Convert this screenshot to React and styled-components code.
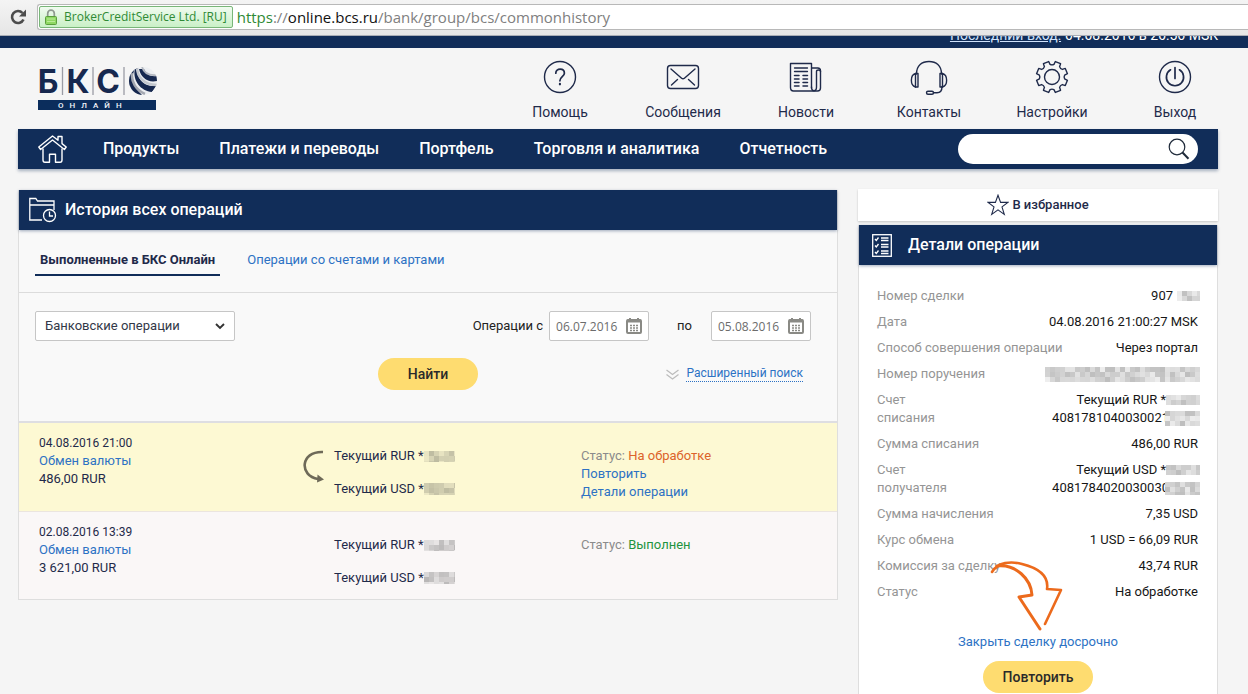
import React from "react";
import styled, { createGlobalStyle } from "styled-components";

const navy = "#112d59";
const ink = "#1f2a4a";
const link = "#2d72c4";
const yellow = "#fedc70";

const GlobalStyle = createGlobalStyle`
  *, *::before, *::after { box-sizing: border-box; }
  body {
    margin: 0;
    background: #f5f5f5;
    color: ${ink};
    font: 13px/18px Roboto, "Liberation Sans", sans-serif;
  }
  button, input, select { font: inherit; color: inherit; }
  button { cursor: pointer; }
  a { color: ${link}; text-decoration: none; }
`;

const Page = styled.div`
  min-height: 100vh;
  display: flex;
  flex-direction: column;
`;

/* Browser bar */
const BrowserBar = styled.div`
  display: flex;
  align-items: center;
  height: 36px;
  padding: 0 0 2px 9px;
  gap: 10px;
  background: linear-gradient(#f4f4f4, #e6e6e6);
  border-bottom: 1px solid #a9adb5;
`;
const Reload = styled.button`
  display: flex;
  padding: 0;
  border: 0;
  background: none;
`;
const AddressBox = styled.form`
  flex: 1;
  display: flex;
  align-items: center;
  gap: 4px;
  height: 26px;
  padding: 1px;
  background: #fff;
  border: 1px solid #b8b8b8;
  border-right: 0;
  border-radius: 3px 0 0 3px;
`;
const Certificate = styled.span`
  display: flex;
  align-items: center;
  gap: 7px;
  height: 22px;
  padding: 0 5px;
  border: 1px solid #79b679;
  border-radius: 2px;
  background: linear-gradient(#f1fbf0, #c9f0c6);
  color: #2f8a35;
  font: 12px/20px "Open Sans", sans-serif;
  white-space: nowrap;
`;
const Url = styled.span`
  color: #808080;
  font: 15px/22px "Open Sans", sans-serif;
  white-space: nowrap;
  b { font-weight: 400; color: #111; }
  em { font-style: normal; color: #2f8a35; }
`;

/* Header */
const LastLogin = styled.div`
  display: flex;
  justify-content: flex-end;
  align-items: flex-end;
  height: 12px;
  padding: 0 30px 6px 18px;
  overflow: hidden;
  background: ${navy};
  color: #fff;
  gap: 4px;
  font-size: 14px;
  line-height: 14px;
  a { color: #cfe2fb; text-decoration: underline; }
`;
const Header = styled.header`
  display: flex;
  justify-content: space-between;
  align-items: flex-start;
  height: 81px;
  padding: 12px 31px 0 38px;
`;
const LogoLink = styled.a`
  display: block;
  padding-top: 6px;
`;
const Services = styled.nav`
  display: grid;
  grid-template-columns: repeat(6, 84px);
  column-gap: 39px;
`;
const Service = styled.a`
  display: flex;
  flex-direction: column;
  align-items: center;
  gap: 8px;
  color: ${ink};
  font-size: 14px;
  line-height: 20px;
  white-space: nowrap;
`;

const MenuBar = styled.nav`
  display: flex;
  align-items: center;
  gap: 40px;
  height: 40px;
  margin: 0 30px 0 18px;
  padding: 0 20px;
  background: ${navy};
  box-shadow: 0 2px 3px rgba(17, 45, 89, 0.35);
`;
const HomeLink = styled.a`
  display: flex;
  width: 30px;
  margin-right: -5px;
`;
const MenuItem = styled.a`
  color: #fff;
  font-size: 16px;
  font-weight: 500;
  white-space: nowrap;
`;
const Search = styled.form`
  display: flex;
  align-items: center;
  width: 240px;
  height: 30px;
  margin-left: auto;
  padding: 0 8px 0 16px;
  border-radius: 15px;
  background: #fff;
  input { flex: 1; min-width: 0; border: 0; outline: 0; background: none; }
  button { display: flex; padding: 0; border: 0; background: none; }
`;

/* Main columns */
const Columns = styled.main`
  flex: 1;
  display: grid;
  grid-template-columns: minmax(0, 1fr) 360px;
  column-gap: 20px;
  padding: 20px 30px 0 18px;
`;
const History = styled.section`
  align-self: start;
  margin-top: 1px;
  border: 1px solid #dedede;
  border-top: 0;
  background: #f9f9f9;
`;
const PanelHead = styled.div`
  display: flex;
  align-items: center;
  gap: ${(p) => p.$gap};
  height: 40px;
  padding: 0 ${(p) => p.$pad};
  background: ${navy};
  box-shadow: 0 1px 3px rgba(17, 45, 89, 0.4);
  color: #fff;
  h2 { margin: 0; font-size: 16px; font-weight: 500; line-height: 20px; }
`;
const Tabs = styled.div`
  display: flex;
  align-items: flex-start;
  gap: 22px;
  height: 63px;
  padding: 20px 16px 0;
  border-bottom: 1px solid #dcdcdc;
`;
const Tab = styled.a`
  height: 26px;
  padding: 0 5px;
  line-height: 20px;
  color: ${(p) => (p.$active ? ink : link)};
  font-weight: ${(p) => (p.$active ? 700 : 400)};
  border-bottom: 2px solid ${(p) => (p.$active ? navy : "transparent")};
`;

const Filters = styled.form`
  height: 130px;
  padding: 18px 26px 0 16px;
  border-bottom: 2px solid #dedee2;
`;
const FilterRow = styled.div`
  display: flex;
  align-items: center;
  height: 30px;
  color: #222;
`;
const Field = styled.span`
  display: flex;
  align-items: center;
  width: ${(p) => p.$width};
  height: 30px;
  padding-right: 6px;
  border: 1px solid #c6c6c6;
  border-radius: 2px;
  background: #fff;
`;
const Select = styled.select`
  flex: 1;
  height: 28px;
  padding: 0 9px;
  margin-right: -22px;
  border: 0;
  outline: 0;
  appearance: none;
  background: none;
  color: #333848;
`;
const ChevronBox = styled.span`
  display: flex;
  margin-right: 3px;
  pointer-events: none;
`;
const DateInput = styled.input`
  flex: 1;
  min-width: 0;
  height: 28px;
  padding: 0 0 0 6px;
  border: 0;
  outline: 0;
  background: none;
  color: #6c6c6c;
  font: 12px/18px "Open Sans", sans-serif;
`;
const IconButton = styled.button`
  display: flex;
  padding: 0;
  border: 0;
  background: none;
`;
const DateGroup = styled.div`
  display: flex;
  align-items: center;
  margin-left: auto;
`;
const DateLabel = styled.label`
  padding: ${(p) => p.$pad};
`;
const ActionRow = styled.div`
  display: grid;
  grid-template-columns: 1fr 100px 1fr;
  align-items: center;
  margin-top: 17px;
  padding-left: 10px;
`;
const Pill = styled.button`
  width: ${(p) => p.$width};
  height: 32px;
  border: 0;
  border-radius: 16px;
  background: ${yellow};
  color: #2a2a2a;
  font-size: 14px;
  font-weight: 500;
`;
const Advanced = styled.a`
  justify-self: end;
  display: flex;
  align-items: center;
  gap: 7px;
  padding-right: 8px;
  font-size: 12px;
  span { line-height: 15px; border-bottom: 1px dotted ${link}; }
`;

const Operation = styled.article`
  display: grid;
  grid-template-columns: 36% 1fr 236px;
  min-height: 88px;
  padding: 11px 20px 0;
  background: ${(p) => (p.$current ? "#fdf9d3" : "#faf7f7")};
  border-top: ${(p) => (p.$current ? "0" : "1px solid #ebe5df")};
  time { font-size: 12px; }
`;
const Lines = styled.div`
  display: flex;
  flex-direction: column;
  padding-top: ${(p) => (p.$low ? "13px" : "0")};
`;
const Accounts = styled.div`
  display: grid;
  grid-template-columns: 31px 1fr;
  padding-top: 13px;
  margin-left: -16px;
`;
const AccountList = styled.div`
  display: flex;
  flex-direction: column;
  gap: 15px;
`;
const Account = styled.span`
  display: flex;
  align-items: center;
`;
const Status = styled.span`
  color: #8b8b8b;
  b { font-weight: 400; color: ${(p) => (p.$done ? "#1f9440" : "#dc632a")}; }
`;

/* Details column */
const Side = styled.aside`
  display: flex;
  flex-direction: column;
  gap: 4px;
`;
const Favorite = styled.button`
  display: flex;
  align-items: center;
  justify-content: center;
  gap: 3px;
  height: 32px;
  padding: 0;
  border: 0;
  background: #fff;
  box-shadow: 0 1px 2px rgba(0, 0, 0, 0.2);
  font-weight: 500;
`;
const Details = styled.section`
  position: relative;
  flex: 1;
  display: flex;
  flex-direction: column;
  border: 1px solid #dedede;
  border-width: 0 1px;
  background: #fff;
`;
const DetailList = styled.dl`
  display: flex;
  flex-direction: column;
  gap: 8px;
  margin: 0;
  padding: 22px 17px 0 18px;
`;
const Detail = styled.div`
  display: flex;
  justify-content: space-between;
  dt { max-width: ${(p) => (p.$narrow ? "80px" : "none")}; color: #959595; }
  dd { margin: 0; padding-right: 2px; color: #161616; text-align: right; }
`;
const MaskedLine = styled.span`
  display: flex;
  align-items: center;
  justify-content: flex-end;
  height: 18px;
  gap: ${(p) => p.$gap || "0"};
  margin-right: -2px;
`;
const Cover = styled.span`
  display: flex;
  margin-left: ${(p) => (p.$over ? "-4px" : "0")};
`;
const DetailActions = styled.div`
  display: flex;
  flex-direction: column;
  align-items: center;
  gap: 10px;
  padding-top: 32px;
`;
const Pointer = styled.svg`
  position: absolute;
  left: 130px;
  top: 334px;
  pointer-events: none;
`;

const line = { fill: "none", stroke: "currentColor", strokeWidth: 1.4, strokeLinecap: "round", strokeLinejoin: "round" };

const gearTeeth = (() => {
  const pts = [];
  for (let i = 0; i < 8; i += 1) {
    const base = (i * Math.PI) / 4 + Math.PI / 8;
    [[-0.24, 12.8], [-0.18, 15.8], [0.18, 15.8], [0.24, 12.8]].forEach(([a, r]) => {
      const t = base + a;
      pts.push(`${(18 + r * Math.sin(t)).toFixed(2)} ${(17 - r * Math.cos(t)).toFixed(2)}`);
    });
  }
  let d = `M${pts[0]}`;
  for (let i = 1; i < pts.length; i += 1) {
    d += i % 4 === 0 ? `A4 4 0 0 0 ${pts[i]}` : `L${pts[i]}`;
  }
  return `${d}A4 4 0 0 0 ${pts[0]}Z`;
})();

const icons = {
  help: (
    <>
      <circle cx="18" cy="17" r="15.5" />
      <path d="M13.8 13.2c0-5.4 8.6-5.3 8.6 0 0 3.3-4.5 3.8-4.5 7.6" strokeWidth="1.7" />
      <path d="M17.9 23.9v.4" strokeWidth="2.2" />
    </>
  ),
  mail: (
    <>
      <rect x="2.5" y="5.5" width="31" height="23" rx="3" />
      <path d="M6 9l10.6 9.2c.8.7 2 .7 2.8 0L30 9M6.5 25l6-5.5M29.5 25l-6-5.5" />
    </>
  ),
  news: (
    <>
      <path d="M23.500 28V3.500H2.500v24c0 2 1.200 3.500 3 3.500h24c1.800 0 3-1.200 3-3V11c0-2-1.200-3-2.700-3h-6.300" />
      <path d="M23.500 27c0 5 5 5 5 0V11.500c0-2 4-2 4 0" />
      <path d="M6.500 8h13M6.500 11.500h13" strokeWidth="1.300" />
      <path d="M6.500 15.500h4.500M15 15.500h4.500M6.500 19h4.500M15 19h4.500M6.500 22.500h4.500M15 22.500h4.500M6.500 26h4.500M15 26h4.500" strokeWidth="1.500" />
    </>
  ),
  contacts: (
    <>
      <path d="M5.500 14C5.500 5.500 11 1.500 18 1.500S30.500 5.500 30.500 14M31 26.500c0 4-2 6.300-5 6.300h-3.500" />
      <path d="M4.500 13.500C-1 15-1 25.500 4.500 27zM31.500 13.500c5.500 1.500 5.500 12 0 13.500z" />
      <path d="M4.500 13.500H7V27H4.500M31.500 13.500H29V27h2.500" />
      <rect x="15.500" y="31.200" width="7" height="3" rx="1.500" />
    </>
  ),
  settings: (
    <>
      <circle cx="18" cy="17" r="7.500" />
      <path d={gearTeeth} />
    </>
  ),
  power: (
    <>
      <circle cx="18" cy="17" r="15.500" />
      <path d="M13.500 9.800a8.600 8.600 0 1 0 9 0M18 7.500v11" strokeWidth="1.700" />
    </>
  ),
};

function ServiceIcon({ name }) {
  return (
    <svg width="36" height="34" viewBox="0 0 36 34" overflow="visible" aria-hidden="true" {...line}>
      {icons[name]}
    </svg>
  );
}

function Logo() {
  return (
    <svg width="120" height="46" viewBox="0 0 120 46" overflow="visible" role="img" aria-label="БКС Онлайн">
      <g fill="#16284f" fontFamily="Inter, sans-serif" fontWeight="700" fontSize="32">
        <text x="10" y="27" textAnchor="middle">Б</text>
        <text x="40" y="27" textAnchor="middle">К</text>
        <text x="70" y="27" textAnchor="middle">С</text>
      </g>
      <path d="M24.500 1v28M55 1v28M86 1v28" stroke="#9a9ca5" strokeWidth="1.300" />
      <defs>
        <clipPath id="globe"><circle cx="105" cy="15" r="14" /></clipPath>
      </defs>
      <g clipPath="url(#globe)">
        <rect x="91" y="1" width="28" height="28" fill="#eceef1" />
        <path d="M91 1h7c-6 8-3 20 6 28H91z" fill="#16284f" />
        <path d="M94 7c-1 9 4 17 13 21" stroke="#a4a8b1" strokeWidth="2.500" fill="none" />
        <path d="M97 2c-3 13 6 23 17 24l4-6C106 21 98 13 100 1z" fill="#16284f" />
        <path d="M99 1c0 10 7 18 20 18" stroke="#c3c7ce" strokeWidth="2.500" fill="none" />
        <path d="M101 3c2 9 9 14 18 12v-5c-7 1-11-2-13-7z" fill="#16284f" />
        <path d="M104 1c2 6 7 9 15 8" stroke="#b4b8c0" strokeWidth="1.800" fill="none" />
      </g>
      <rect y="34" width="118" height="10" fill="#0b2d5c" />
      <text x="20" y="42" fill="#f2f6fb" fontFamily="Roboto, sans-serif" fontSize="8" fontWeight="500" letterSpacing="6">ОНЛАЙН</text>
    </svg>
  );
}

function Calendar() {
  return (
    <svg width="16" height="16" viewBox="0 0 16 16" aria-hidden="true">
      <rect x="1" y="2" width="14" height="13" rx="1" fill="#fff" stroke="#8a8a85" strokeWidth="2" />
      <path d="M1 3h14" stroke="#8a8a85" strokeWidth="3" />
      <path d="M4 0v2M12 0v2" stroke="#8a8a85" strokeWidth="2" />
      <path d="M4 7.500h8M4 10h8M4 12.500h8" stroke="#8a8a85" strokeWidth="1.400" strokeDasharray="2 1" />
    </svg>
  );
}

const noise = (n) => {
  const v = Math.sin(n * 12.9898) * 43758.5453;
  return v - Math.floor(v);
};

/* Pixelated cover over hidden account digits */
function Mosaic({ width, height = 12, cell = 5, seed = 0, over = false }) {
  const cols = Math.ceil(width / cell);
  const rows = Math.ceil(height / cell);
  const cells = [];
  for (let r = 0; r < rows; r += 1) {
    for (let c = 0; c < cols; c += 1) {
      const o = 0.08 + 0.24 * noise(c * 7 + r * 31 + seed * 101 + 1);
      cells.push(<rect key={`${r}-${c}`} x={c * cell} y={r * cell} width={cell} height={cell} fill="#333" opacity={o} />);
    }
  }
  return (
    <Cover $over={over}>
      <svg width={width} height={height} shapeRendering="crispEdges" aria-hidden="true">
        {over && <rect width={width} height={height} fill="#fff" />}
        {cells}
      </svg>
    </Cover>
  );
}

const services = [
  ["help", "Помощь"],
  ["mail", "Сообщения"],
  ["news", "Новости"],
  ["contacts", "Контакты"],
  ["settings", "Настройки"],
  ["power", "Выход"],
];
const menu = ["Продукты", "Платежи и переводы", "Портфель", "Торговля и аналитика", "Отчетность"];

function OperationRow({ date, amount, current, seed, children }) {
  return (
    <Operation $current={current}>
      <Lines>
        <time>{date}</time>
        <a href="#exchange">Обмен валюты</a>
        <span>{amount}</span>
      </Lines>
      <Accounts>
        <span>
          {current && (
            <svg width="22" height="38" viewBox="0 0 22 38" aria-hidden="true">
              <path d="M20 5C-3 4-4 29 15 32" fill="none" stroke="#6e6a58" strokeWidth="2.600" />
              <path d="M14.500 27.500l6.500 5-7 3z" fill="#6e6a58" />
            </svg>
          )}
        </span>
        <AccountList>
          <Account>Текущий RUR *<Mosaic width={31} height={11} seed={seed} /></Account>
          <Account>Текущий USD *<Mosaic width={31} seed={seed + 3} /></Account>
        </AccountList>
      </Accounts>
      <Lines $low>{children}</Lines>
    </Operation>
  );
}

export default function App() {
  return (
    <Page>
      <GlobalStyle />
      <BrowserBar>
        <Reload aria-label="Обновить">
          <svg width="18" height="18" viewBox="0 0 18 18" aria-hidden="true">
            <path d="M14.500 11.500a6 6 0 1 1-1-6.500" fill="none" stroke="#4c4c4c" strokeWidth="2.600" />
            <path d="M17 1.500v7h-7z" fill="#4c4c4c" />
          </svg>
        </Reload>
        <AddressBox>
          <Certificate>
            <svg width="12" height="16" viewBox="0 0 12 16" aria-hidden="true">
              <path d="M2.700 8V4.500a3.300 3.300 0 0 1 6.600 0V8" fill="none" stroke="#8f9a8f" strokeWidth="1.700" />
              <rect x="0.500" y="7.500" width="11" height="8" rx="1" fill="#8ed862" stroke="#5a9e3c" />
              <path d="M2 10h8M2 12.500h8" stroke="#b9ec97" />
            </svg>
            BrokerCreditService Ltd. [RU]
          </Certificate>
          <Url><em>https</em>://<b>online.bcs.ru</b>/bank/group/bcs/commonhistory</Url>
        </AddressBox>
      </BrowserBar>
      <LastLogin>
        <a href="#last">Последний вход:</a>
        <span>04.08.2016 в 20:56 MSK</span>
      </LastLogin>
      <Header>
        <LogoLink href="#home"><Logo /></LogoLink>
        <Services>
          {services.map(([name, label]) => (
            <Service key={name} href={`#${name}`}>
              <ServiceIcon name={name} />
              {label}
            </Service>
          ))}
        </Services>
      </Header>
      <MenuBar>
        <HomeLink href="#home" aria-label="Главная">
          <svg width="30" height="30" viewBox="0 0 30 30" aria-hidden="true" fill="none" stroke="#fff" strokeWidth="1.400" strokeLinejoin="round">
            <path d="M14.500 2L.8 13l1.800 2.500L14.500 6l11.900 9.500 1.800-2.500-4.200-3.400V2.500h-4v3.800z" />
            <path d="M5 14.500V26c0 1.500.8 2.300 2 2.300h4.500v-8h6v8H22c1.300 0 2-.9 2-2.300V14.500" />
          </svg>
        </HomeLink>
        {menu.map((m) => (
          <MenuItem key={m} href="#menu">{m}</MenuItem>
        ))}
        <Search>
          <input type="search" aria-label="Поиск" />
          <button type="button" aria-label="Найти на сайте">
            <svg width="22" height="22" viewBox="0 0 22 22" fill="none" stroke="#1f2a3a" aria-hidden="true">
              <circle cx="9" cy="9" r="7.800" strokeWidth="1.200" />
              <path d="M14.500 14.500l6 6.300" strokeWidth="2" />
            </svg>
          </button>
        </Search>
      </MenuBar>

      <Columns>
        <History>
          <PanelHead $gap="8px" $pad="10px">
            <svg width="28" height="26" viewBox="0 0 28 26" aria-hidden="true" fill="none" stroke="#fff" strokeWidth="1.300">
              <path d="M13 23H.8V1.500h6L8.500 4H25v9M.8 8H25" />
              <circle cx="20.500" cy="18.500" r="6" />
              <path d="M20.500 14.500v4.500h3.500" />
            </svg>
            <h2>История всех операций</h2>
          </PanelHead>
          <Tabs>
            <Tab href="#done" $active>Выполненные в БКС Онлайн</Tab>
            <Tab href="#accounts">Операции со счетами и картами</Tab>
          </Tabs>
          <Filters>
            <FilterRow>
              <Field $width="200px">
                <Select aria-label="Тип операций">
                  <option>Банковские операции</option>
                </Select>
                <ChevronBox>
                  <svg width="10" height="8" viewBox="0 0 10 8" fill="none" stroke="#333" strokeWidth="1.900" aria-hidden="true">
                    <path d="M1 2l4 4 4-4" />
                  </svg>
                </ChevronBox>
              </Field>
              <DateGroup>
                <DateLabel htmlFor="from" $pad="0 6px 0 0">Операции с</DateLabel>
                <Field $width="100px">
                  <DateInput id="from" defaultValue="06.07.2016" />
                  <IconButton type="button" aria-label="Календарь"><Calendar /></IconButton>
                </Field>
                <DateLabel htmlFor="to" $pad="0 19px 0 28px">по</DateLabel>
                <Field $width="100px">
                  <DateInput id="to" defaultValue="05.08.2016" />
                  <IconButton type="button" aria-label="Календарь"><Calendar /></IconButton>
                </Field>
              </DateGroup>
            </FilterRow>
            <ActionRow>
              <span />
              <Pill type="button" $width="100px">Найти</Pill>
              <Advanced href="#advanced">
                <svg width="13" height="11" viewBox="0 0 13 11" fill="none" stroke="#bcbcbc" strokeWidth="1.300" aria-hidden="true">
                  <path d="M.5 1l6 4.500 6-4.500M.5 5.500l6 4.500 6-4.500" />
                </svg>
                <span>Расширенный поиск</span>
              </Advanced>
            </ActionRow>
          </Filters>
          <OperationRow date="04.08.2016 21:00" amount="486,00 RUR" current seed={1}>
            <Status>Статус: <b>На обработке</b></Status>
            <a href="#repeat">Повторить</a>
            <a href="#details">Детали операции</a>
          </OperationRow>
          <OperationRow date="02.08.2016 13:39" amount="3 621,00 RUR" seed={6}>
            <Status $done>Статус: <b>Выполнен</b></Status>
          </OperationRow>
        </History>

        <Side>
          <Favorite type="button">
            <svg width="22" height="22" viewBox="0 0 22 22" fill="none" stroke={ink} strokeWidth="1.100" aria-hidden="true">
              <path d="M11 1.200l2.600 7.200h7.300l-5.900 4.500 2.300 7.500-6.300-4.500-6.300 4.500L7 12.900 1.100 8.400h7.300z" />
            </svg>
            В избранное
          </Favorite>
          <Details>
            <PanelHead $gap="16px" $pad="13px">
              <svg width="20" height="23" viewBox="0 0 20 23" fill="none" stroke="#fff" strokeWidth="1.300" aria-hidden="true">
                <rect x=".7" y=".7" width="18.600" height="21.600" />
                <path d="M3 5l1.300 1.500L6.500 3.500M3 11.500L4.300 13l2.200-3M3 18l1.300 1.500 2.200-3M9 4h7.500M9 6.500h7.500M9 10.500h7.500M9 13h7.500M9 17h7.500M9 19.500h7.500" />
              </svg>
              <h2>Детали операции</h2>
            </PanelHead>
            <DetailList>
              <Detail><dt>Номер сделки</dt><dd><MaskedLine $gap="4px">907 <Mosaic width={23} height={10} seed={1} /></MaskedLine></dd></Detail>
              <Detail><dt>Дата</dt><dd>04.08.2016 21:00:27 MSK</dd></Detail>
              <Detail><dt>Способ совершения операции</dt><dd>Через портал</dd></Detail>
              <Detail><dt>Номер поручения</dt><dd><MaskedLine><Mosaic width={155} height={15} seed={4} /></MaskedLine></dd></Detail>
              <Detail $narrow>
                <dt>Счет списания</dt>
                <dd>
                  <MaskedLine>Текущий RUR *<Mosaic width={34} height={10} seed={2} /></MaskedLine>
                  <MaskedLine>4081781040030021<Mosaic width={35} height={15} seed={7} over /></MaskedLine>
                </dd>
              </Detail>
              <Detail><dt>Сумма списания</dt><dd>486,00 RUR</dd></Detail>
              <Detail $narrow>
                <dt>Счет получателя</dt>
                <dd>
                  <MaskedLine>Текущий USD *<Mosaic width={34} height={10} seed={5} /></MaskedLine>
                  <MaskedLine>4081784020030030<Mosaic width={35} height={13} seed={3} over /></MaskedLine>
                </dd>
              </Detail>
              <Detail><dt>Сумма начисления</dt><dd>7,35 USD</dd></Detail>
              <Detail><dt>Курс обмена</dt><dd>1 USD = 66,09 RUR</dd></Detail>
              <Detail><dt>Комиссия за сделку</dt><dd>43,74 RUR</dd></Detail>
              <Detail><dt>Статус</dt><dd>На обработке</dd></Detail>
            </DetailList>
            <DetailActions>
              <a href="#close">Закрыть сделку досрочно</a>
              <Pill type="button" $width="110px">Повторить</Pill>
            </DetailActions>
            <Pointer width="76" height="74" viewBox="0 0 76 74" fill="none" stroke="#ec6a1c" strokeLinecap="round" strokeLinejoin="round" aria-hidden="true">
              <path d="M3 13C9 3 22 2 33 5c16 4 27 12 25 25l14 1L56 65" strokeWidth="2.600" />
              <path d="M8 7c19-2 34 13 35 29l-13 2 21 32" strokeWidth="3" />
            </Pointer>
          </Details>
        </Side>
      </Columns>
    </Page>
  );
}
